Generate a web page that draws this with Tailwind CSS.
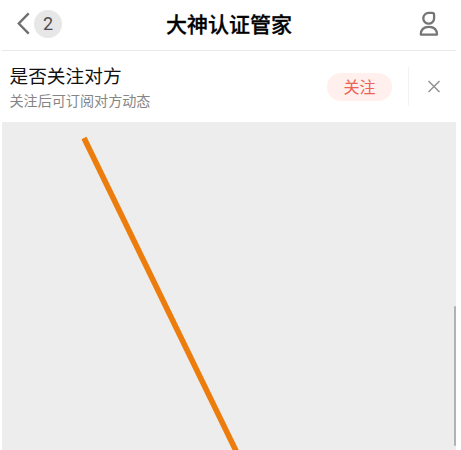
<!DOCTYPE html>
<html lang="zh-CN">
<head>
<meta charset="utf-8">
<title>大神认证管家</title>
<script src="https://cdn.jsdelivr.net/npm/@tailwindcss/browser@4"></script>
</head>
<body class="h-[450px] w-[461px] overflow-hidden bg-white font-['Noto_Sans_CJK_SC',sans-serif]">
<main class="ml-[2px] flex h-[450px] w-[454px] flex-col">
  <header class="grid h-[51px] shrink-0 grid-cols-[1fr_auto_1fr] items-center border-b border-[#e9e9e9] pb-[3px]">
    <div class="flex items-center pl-[14px]">
      <svg class="h-[25px] w-[15px]" viewBox="0 0 15 25" fill="none" stroke="#707070" stroke-width="2.4"><path d="M12.700 2.300 2.800 12.500l9.900 10.200"/></svg>
      <span class="ml-[3px] flex size-[28px] items-center justify-center rounded-full bg-[#e7e7e7] font-[Roboto,sans-serif] text-[18px] leading-none text-[#4b4b4b]">2</span>
    </div>
    <h1 class="pb-[2px] text-[21px] leading-[28px] font-medium whitespace-nowrap text-black [-webkit-text-stroke:0.3px_black]">大神认证管家</h1>
    <div class="flex justify-end pr-[16px]">
      <svg class="h-[25px] w-[22px]" viewBox="0 0 22 25" fill="none" stroke="#757575" stroke-width="2.3" stroke-linejoin="round"><path d="M10.700 1.900h3.300q2.100 0 2.100 2.100v3.300a5.400 5.400 0 1 1-5.400-5.400Z"/><path d="M2.800 23.600c0-4.900 3-7.800 8.100-7.800s8.100 2.900 8.100 7.800Z"/></svg>
    </div>
  </header>
  <section class="flex h-[71px] shrink-0 items-center">
    <div class="flex flex-1 flex-col pl-[7.500px]">
      <p class="text-[18.700px] leading-[25px] text-[#111]">是否关注对方</p>
      <p class="pt-[1px] text-[14.100px] leading-[24px] text-[#858585]">关注后可订阅对方动态</p>
    </div>
    <button class="flex h-[28px] w-[65px] items-center justify-center rounded-full bg-[#fff0ee] pb-[2px] text-[16px] text-[#ed6253]">关注</button>
    <div class="ml-[16px] h-[39px] w-px bg-[#f2f2f2]"></div>
    <svg class="mr-[15px] ml-[18px] size-[14px]" viewBox="0 0 14 14" stroke="#929292" stroke-width="1.500"><path d="m1.500 1 11 11m0-11-11 11"/></svg>
  </section>
  <section class="relative flex-1 bg-[#ededed]">
    <svg class="absolute inset-0 h-full w-full" viewBox="0 0 454 328"><path d="M82 16 236.500 334" fill="none" stroke="#ec7c0c" stroke-width="5.600"/></svg>
    <div class="absolute top-[184px] right-0 h-[140px] w-[2px] rounded-full bg-[#b2b2b2]"></div>
  </section>
</main>
</body>
</html>
